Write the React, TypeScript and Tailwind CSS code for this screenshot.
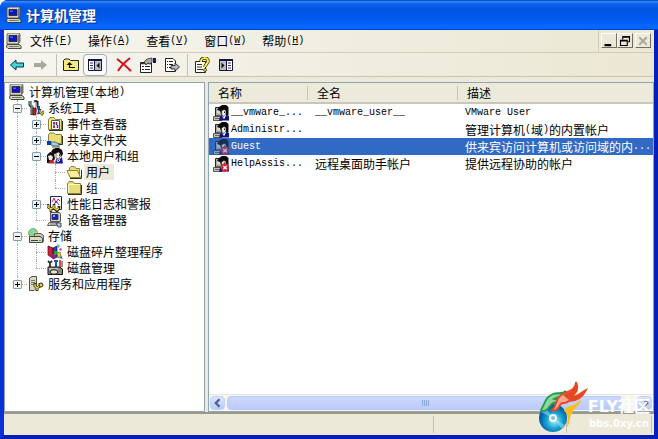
import { ReactNode, useState } from "react";
import clsx from "clsx";

interface IIcon {
    children: ReactNode;
    className?: string;
}

const Icon = ({ children, className }: IIcon) => {
    return (
        <svg viewBox="0 0 16 16" aria-hidden="true" className={clsx("shrink-0", className ?? "size-4")}>
            {children}
        </svg>
    );
};

const ComputerIcon = () => (
    <Icon>
        <path d="M1 1L3 0H13L14 1V9L12 11H1Z" fill="#d8d4c0" stroke="#55534a" strokeWidth=".8" />
        <path d="M12 2L14 1V9L12 11Z" fill="#77746a" />
        <path d="M3 2.500H11V8.500H3Z" fill="#0a14c8" stroke="#222" strokeWidth=".8" />
        <path d="M4 3.500H7V5H4Z" fill="#4468ff" />
        <path d="M1 11.500H13L15 13V15.500H2L0.500 14Z" fill="#d8d4c0" stroke="#333" strokeWidth=".9" />
        <path d="M3 13.500H12" stroke="#77746a" />
        <path d="M11 13H13V14H11Z" fill="#2c2" />
    </Icon>
);

const ToolsIcon = () => (
    <Icon>
        <path d="M2 1V5L4 7V15" stroke="#333" strokeWidth="3" fill="none" />
        <path d="M2 1V4L4 6V14" stroke="#6ca6a0" strokeWidth="1.400" fill="none" />
        <path d="M6 1L9 2V7L11 14" stroke="#222" strokeWidth="3" fill="none" />
        <path d="M6 2L8 3V6L10 13" stroke="#d8d8d8" strokeWidth="1.300" fill="none" />
        <path d="M5 8H8V15H5Z" fill="#c22018" stroke="#400" strokeWidth=".6" />
        <path d="M10 6H12V14H10Z" fill="#2848b0" />
        <path d="M12 9V12L14 14L16 11" stroke="#333" strokeWidth="2.400" fill="none" />
        <path d="M12 10V12L14 14L15.500 11.500" stroke="#e8c830" strokeWidth="1.300" fill="none" />
    </Icon>
);

const FolderShape = () => (
    <>
        <path d="M1.500 3.500L3 1.500H7L8.500 3.500H14.500V13.500H1.500Z" fill="#e9dd7a" stroke="#8d8238" />
        <path d="M2.500 5V12.500M2.500 4.500H13.500" stroke="#fffbc8" />
        <path d="M2 14.500H15.500V5" stroke="#333018" fill="none" />
    </>
);

const FolderIcon = () => (
    <Icon>
        <FolderShape />
    </Icon>
);

const OpenFolderIcon = () => (
    <Icon>
        <path d="M3.500 12V4L5 2.500H8.500L10 4.500H13.500V12" fill="#e9dd7a" stroke="#8d8238" />
        <path d="M1 6.500H11.500L14.500 13.500H4Z" fill="#f6ee98" stroke="#8d8238" />
        <path d="M4 14.500H15.500V6" stroke="#333018" fill="none" />
    </Icon>
);

const EventIcon = () => (
    <Icon>
        <FolderShape />
        <path d="M4.500 4.500H12.500V13.500H4.500Z" fill="#fff" stroke="#555" />
        <path d="M6 7H8M6 11H8" stroke="#d02020" strokeWidth="2" />
        <path d="M9.500 6V9M10.500 9V12" stroke="#2030c0" strokeWidth="1.500" />
        <path d="M6 9H8" stroke="#222" />
    </Icon>
);

const SharedIcon = () => (
    <Icon>
        <path d="M1.500 2.500L3 1H7L8.500 2.500H14.500V11.500H1.500Z" fill="#e9dd7a" stroke="#8d8238" />
        <path d="M4 12.500H15.500V4" stroke="#333018" fill="none" />
        <path d="M0 9H4V13H0Z" fill="#0838c0" />
        <path d="M4 10H8L12 12V14H7L4 13Z" fill="#a9d4d8" stroke="#35585c" strokeWidth=".8" />
        <path d="M5 15H13" stroke="#555" />
    </Icon>
);

const UserIcon = ({ disabled }: { disabled?: boolean }) => (
    <Icon>
        <path d="M2.500 2.500H9V11H2.500Z" fill="#a9a99c" stroke="#222" />
        <path d="M4 4.500H8V8.500H4Z" fill="#dcdccf" />
        <path d="M0.500 11.500H9V15.500H0.500Z" fill="#c4c2b2" stroke="#333" strokeWidth=".8" />
        <path d="M2 13.500H7" stroke="#666" />
        <path d="M4 5L6 2L9 0H13L15.500 2V10L13 10L12 5L9 6L8 9L7 6Z" fill="#080808" />
        <path d="M8.500 6L11 4.500L13 5.500V9L11 11.500L9 10.500Z" fill="#f5f0e8" stroke="#111" strokeWidth=".6" />
        <path d="M11 6.500H12V8H11Z" fill="#111" />
        <path d="M6 15.500L7 12L9.500 10.500L11 13L13.500 9.500L16 11V15.500Z" fill="#10107c" />
        <path d="M9.500 11.500L11 13.500L12.500 10.500" fill="none" stroke="#fff" />
        {disabled && (
            <>
                <circle cx="12" cy="11.500" r="4.200" fill="#d82434" />
                <path d="M10.300 10L13.700 13.200M13.700 10L10.300 13.200" stroke="#fff" strokeWidth="1.200" />
            </>
        )}
    </Icon>
);

const GroupIcon = () => (
    <Icon>
        <path d="M0 7L3 4L7 5L8 11L4 15H0Z" fill="#111" />
        <path d="M1 8L4 7L6 9L5 12L2 12Z" fill="#f4e4dc" />
        <path d="M4 4L6 1L9 0H12L15 2L16 6L14 9L11 5L7 6Z" fill="#100808" />
        <path d="M9 5L12 4L14 7L12 11L9 10Z" fill="#f8ece0" stroke="#222" strokeWidth=".6" />
        <path d="M12 6H13V8H12Z" fill="#922" />
        <path d="M8 15.500L9 11L12 12L15 9L16 15.500Z" fill="#10189c" />
        <path d="M1 15.500L3 12L6 12L8 15.500Z" fill="#b82828" />
        <path d="M10 12L11 14L13 12" fill="none" stroke="#fff" />
    </Icon>
);

const PerfIcon = () => (
    <Icon>
        <path d="M3.500 .5H14.500V13.500H3.500Z" fill="#fff" stroke="#1c2464" />
        <path d="M5 6L7 2L9 7L11 3L13 5" fill="none" stroke="#d02060" />
        <path d="M7 9L9 5L12 9" fill="none" stroke="#3038c0" />
        <path d="M1 8V11L4 13L7 11V8M4 13V16M7 12L10 15L12 12V10" fill="none" stroke="#302c10" strokeWidth="2.600" />
        <path d="M1 9V11L4 13L7 11V9M4 13V15M7 12L10 14L12 12" fill="none" stroke="#eed848" strokeWidth="1.300" />
    </Icon>
);

const DeviceIcon = () => (
    <Icon>
        <path d="M3.500 .5H12.500L13.500 2V9.500H3.500Z" fill="#d8d4c0" stroke="#555" />
        <path d="M5 2.500H11V7.500H5Z" fill="#1020d0" stroke="#223" strokeWidth=".7" />
        <path d="M6 3H8V5H6Z" fill="#80a8ff" />
        <path d="M2 10.500H12L14 13.500H0.500Z" fill="#dedac8" stroke="#444" strokeWidth=".8" />
        <path d="M3 12H11" stroke="#777" />
        <path d="M9 11H14V15H11Z" fill="#aec8d4" stroke="#335" strokeWidth=".8" />
    </Icon>
);

const StorageIcon = () => (
    <Icon>
        <circle cx="5" cy="5" r="4.500" fill="#8ed47c" stroke="#4b9a50" strokeWidth=".7" />
        <path d="M5 5L2 1L6 .5Z" fill="#70d4e4" />
        <path d="M5 5L9 4L9 7Z" fill="#f4e860" />
        <path d="M6.500 5.500H13L15.500 7.500V13.500H6.500Z" fill="#c4c1b2" stroke="#444" strokeWidth=".8" />
        <path d="M1.500 8.500H12L14.500 10.500V14.500H1.500Z" fill="#dcd9ca" stroke="#333" strokeWidth=".9" />
        <path d="M3 12.500H10" stroke="#444" />
        <path d="M11 12H13V13H11Z" fill="#2b2" />
    </Icon>
);

const DefragIcon = () => (
    <Icon>
        <path d="M1 2L6 4V14L1 11Z" fill="#d42034" stroke="#500" strokeWidth=".7" />
        <path d="M6 4L10 2V13L6 15Z" fill="#2440b8" stroke="#114" strokeWidth=".7" />
        <path d="M2 12L6 15L9 14V11L5 10Z" fill="#a01888" />
        <path d="M7 7H10V11H7Z" fill="#28a048" />
        <path d="M10 9L13 8L14 12L11 14Z" fill="#f0d030" stroke="#540" strokeWidth=".6" />
        <path d="M10 0L13 2L11 4Z" fill="#38b848" />
        <path d="M13 4L15 5L14 7L12 6Z" fill="#d838c0" />
        <path d="M12 14L15 12L15.500 15Z" fill="#2868d8" />
    </Icon>
);

const DiskIcon = () => (
    <Icon>
        <path d="M1 1L3 3L5 1M3 3V8" fill="none" stroke="#333" strokeWidth="1.800" />
        <path d="M7 1H11M9 1V8" stroke="#1c58b8" strokeWidth="2" />
        <path d="M13 0V8" stroke="#c82820" strokeWidth="1.600" />
        <path d="M15 1V7" stroke="#222" />
        <path d="M1 7H12L15.500 9V14.500H1Z" fill="#8f8e86" stroke="#111" />
        <path d="M2 9H11" stroke="#eee" />
        <ellipse cx="7" cy="12" rx="4" ry="2.300" fill="#e4e1d0" stroke="#111" />
        <path d="M12 11H14V12H12Z" fill="#2b2" />
    </Icon>
);

const ServicesIcon = () => (
    <Icon>
        <path d="M1.500 2L4 .5H8.500V12L6 14.500H1.500Z" fill="#dad7c8" stroke="#55534c" />
        <path d="M3 4.500H7M3 6.500H7M3 8.500H7" stroke="#77746a" />
        <path d="M7 7V10L9 12L12 10V7M9 12V15" fill="none" stroke="#333010" strokeWidth="2.800" />
        <path d="M7 8V10L9 12L11.500 10V8M9 12V14" fill="none" stroke="#eee058" strokeWidth="1.300" />
        <circle cx="13" cy="9" r="2" fill="#eed848" stroke="#333010" />
    </Icon>
);

interface IToolButton {
    label: string;
    active?: boolean;
    disabled?: boolean;
    children: ReactNode;
}

const ToolButton = ({ label, active, disabled, children }: IToolButton) => {
    return (
        <button
            aria-label={label}
            disabled={disabled}
            className={clsx(
                "flex h-[22px] w-6 items-center justify-center rounded-sm border",
                active ? "border-[#98aecb] bg-[#fbfaf6]" : "border-transparent"
            )}
        >
            <Icon>{children}</Icon>
        </button>
    );
};

const ToolSeparator = () => (
    <div className="flex w-[6px] justify-center">
        <div className="h-[22px] w-px bg-[#c5c2b0]" />
    </div>
);

const Toolbar = () => {
    return (
        <div className="flex h-6 shrink-0 items-center border-b border-[#c9c6b5] pl-px">
            <ToolButton label="后退">
                <path d="M7 3L1.500 8L7 13V10H14.500V6H7Z" fill="#3ed6dc" stroke="#08304c" strokeLinejoin="round" />
            </ToolButton>
            <ToolButton label="前进" disabled>
                <path d="M8 3L14 8L8 13V10H1V6H8Z" fill="#aaa899" />
            </ToolButton>
            <ToolSeparator />
            <ToolButton label="向上">
                <path d="M.5 13.500V3.500L2 2H6L7.500 3.500H15.500V13.500Z" fill="#f3ed80" stroke="#222" />
                <path d="M3.500 8L6.500 5L9.500 8Z" fill="#111" />
                <path d="M6.500 7V10.500H12" fill="none" stroke="#111" strokeWidth="1.200" />
            </ToolButton>
            <ToolButton label="显示/隐藏控制台树" active>
                <path d="M1.500 2.500H14.500V13.500H1.500Z" fill="#fff" stroke="#14144c" />
                <path d="M1 3H15" stroke="#14144c" strokeWidth="2" />
                <path d="M8 4H14V13H8Z" fill="#bebdc4" />
                <path d="M7.500 4V13" stroke="#14144c" />
                <path d="M3 6H6M3 8.500H6M3 11H6" stroke="#333" />
                <path d="M12.500 5.500V11.500L9.500 8.500Z" fill="#111" />
            </ToolButton>
            <div className="w-[5px]" />
            <ToolButton label="删除">
                <path d="M1 2C5 5 10 9 15 14M14 1C9 5 5 9 2 14" fill="none" stroke="#d8101c" strokeWidth="2" />
            </ToolButton>
            <ToolButton label="属性">
                <path d="M.5 5.500H11.500V15.500H.5Z" fill="#fff" stroke="#222" />
                <path d="M1 6.500H11" stroke="#333" strokeWidth="1.500" />
                <path d="M2 9.500H4M5 9.500H10M2 12.500H4M5 12.500H10" stroke="#222" />
                <path d="M4 5L7 2L12 1V5L10 7L8 6L6 8L5 6Z" fill="#a9a9a6" stroke="#333" strokeWidth=".8" />
                <path d="M13 1H16V6H13Z" fill="#18186c" />
            </ToolButton>
            <ToolButton label="导出列表">
                <path d="M1.500 1.500H9L11.500 4V14.500H1.500Z" fill="#fff" stroke="#222" />
                <path d="M3 4.500H4M5 4.500H9M3 7.500H4M5 7.500H9M3 10.500H4M5 10.500H7" stroke="#222" />
                <path d="M7 8.500H11V6L15.500 10L11 14V12H7Z" fill="#b9b9bd" stroke="#222" strokeWidth=".9" />
            </ToolButton>
            <ToolSeparator />
            <ToolButton label="帮助">
                <path d="M1.500 4.500H11.500V15.500H1.500Z" fill="#fff" stroke="#222" />
                <path d="M3 7.500H8M3 10H8M3 12.500H9" stroke="#333" />
                <path d="M7 5C7 0 14 0 14 4C14 7 11 7 11 10" fill="none" stroke="#333010" strokeWidth="3.400" />
                <path d="M7 5C7 0 14 0 14 4C14 7 11 7 11 10" fill="none" stroke="#f8ec38" strokeWidth="2" />
                <circle cx="11" cy="13" r="1.500" fill="#f8ec38" stroke="#333010" strokeWidth=".8" />
            </ToolButton>
            <ToolButton label="显示操作窗格">
                <path d="M1.500 2.500H14.500V13.500H1.500Z" fill="#fff" stroke="#14144c" />
                <path d="M1 3H15" stroke="#14144c" strokeWidth="2" />
                <path d="M2 4H8V13H2Z" fill="#bebdc4" />
                <path d="M8.500 4V13" stroke="#14144c" />
                <path d="M10 6H13M10 8.500H13M10 11H13" stroke="#333" />
                <path d="M3.500 5.500V11.500L6.500 8.500Z" fill="#111" />
            </ToolButton>
        </div>
    );
};

const menus = [
    { name: "文件", accel: "F" },
    { name: "操作", accel: "A" },
    { name: "查看", accel: "V" },
    { name: "窗口", accel: "W" },
    { name: "帮助", accel: "H" },
];

const childButton =
    "flex h-[15px] w-4 items-center justify-center border border-t-white border-l-white border-r-[#716f64] border-b-[#716f64] bg-[#ece9d8]";

const MenuBar = () => {
    return (
        <div className="flex h-[23px] shrink-0 border-b border-[#cfccba] pl-[2px]">
            <div className="pt-[3px]">
                <ComputerIcon />
            </div>
            <nav className="flex flex-1 items-center">
                {menus.map((menu) => (
                    <button key={menu.accel} className="flex items-center px-2 leading-5">
                        {menu.name}
                        <Latin>
                            (<u>{menu.accel}</u>)
                        </Latin>
                    </button>
                ))}
            </nav>
            <div className="flex items-start border-l border-[#d2cfbe] pt-[3px] pr-[3px] pl-[2px]">
                <button aria-label="最小化" className={childButton}>
                    <Icon className="size-3">
                        <path d="M2 12H11V15H2Z" fill="#000" />
                    </Icon>
                </button>
                <button aria-label="还原" className={childButton}>
                    <Icon className="size-3">
                        <path d="M5 6V2H14V9H12M5 3H14" fill="none" stroke="#000" strokeWidth="1.500" />
                        <path d="M2 7H11V14H2ZM2 8H11" fill="none" stroke="#000" strokeWidth="1.500" />
                    </Icon>
                </button>
                <button aria-label="关闭" disabled className={clsx(childButton, "ml-[2px]")}>
                    <Icon className="size-3">
                        <path d="M3 3L13 13M13 3L3 13" stroke="#aca899" strokeWidth="2.600" />
                    </Icon>
                </button>
            </div>
        </div>
    );
};

const Latin = ({ children }: { children: ReactNode }) => (
    <span className="font-['Liberation_Mono',monospace] text-[10px]">{children}</span>
);

type Guide = "line" | "tee" | "end";

interface INode {
    label: string;
    suffix?: string;
    icon: ReactNode;
    guides: Guide[];
    toggle?: "+" | "-";
}

const nodes: INode[] = [
    { label: "计算机管理", suffix: "本地", icon: <ComputerIcon />, guides: [] },
    { label: "系统工具", icon: <ToolsIcon />, guides: ["tee"], toggle: "-" },
    { label: "事件查看器", icon: <EventIcon />, guides: ["line", "tee"], toggle: "+" },
    { label: "共享文件夹", icon: <SharedIcon />, guides: ["line", "tee"], toggle: "+" },
    { label: "本地用户和组", icon: <GroupIcon />, guides: ["line", "tee"], toggle: "-" },
    { label: "用户", icon: <OpenFolderIcon />, guides: ["line", "line", "tee"] },
    { label: "组", icon: <FolderIcon />, guides: ["line", "line", "end"] },
    { label: "性能日志和警报", icon: <PerfIcon />, guides: ["line", "tee"], toggle: "+" },
    { label: "设备管理器", icon: <DeviceIcon />, guides: ["line", "end"] },
    { label: "存储", icon: <StorageIcon />, guides: ["tee"], toggle: "-" },
    { label: "磁盘碎片整理程序", icon: <DefragIcon />, guides: ["line", "tee"] },
    { label: "磁盘管理", icon: <DiskIcon />, guides: ["line", "end"] },
    { label: "服务和应用程序", icon: <ServicesIcon />, guides: ["end"], toggle: "+" },
];

const GuideCell = ({ guide, toggle }: { guide: Guide; toggle?: "+" | "-" }) => (
    <div className="relative h-4 w-[19px] shrink-0">
        <div
            className={clsx(
                "absolute top-0 left-[9px] border-l border-dotted border-[#b3b1a6]",
                guide === "end" ? "h-2" : "h-4"
            )}
        />
        {guide !== "line" && (
            <div className="absolute top-2 right-0 left-[9px] border-t border-dotted border-[#b3b1a6]" />
        )}
        {toggle && (
            <button
                aria-label={toggle === "+" ? "展开" : "折叠"}
                className="absolute top-1 left-[5px] size-[9px] rounded-[1px] border border-[#7f9db9] bg-[#f1f0ea]"
            >
                <svg viewBox="0 0 7 7" className="size-[7px]">
                    <path d={toggle === "+" ? "M1 3.500H6M3.500 1V6" : "M1 3.500H6"} stroke="#000" />
                </svg>
            </button>
        )}
    </div>
);

const Tree = () => {
    return (
        <div className="w-[201px] shrink-0 overflow-hidden border border-[#8fa5b5] bg-white pt-px pl-[3px]">
            <ul>
                {nodes.map((node) => (
                    <li key={node.label} className="flex h-4 items-center">
                        {node.guides.map((guide, i) => (
                            <GuideCell
                                key={i}
                                guide={guide}
                                toggle={i === node.guides.length - 1 ? node.toggle : undefined}
                            />
                        ))}
                        <div className="flex w-[19px] shrink-0 pl-px">{node.icon}</div>
                        <span
                            className={clsx(
                                "flex h-4 items-center pr-1 pl-[2px] whitespace-nowrap",
                                node.label === "用户" && "bg-[#ece9d8]"
                            )}
                        >
                            {node.label}
                            {node.suffix && (
                                <>
                                    <Latin>(</Latin>
                                    {node.suffix}
                                    <Latin>)</Latin>
                                </>
                            )}
                        </span>
                    </li>
                ))}
            </ul>
        </div>
    );
};

const users = [
    { name: "__vmware_...", full: <Latin>__vmware_user__</Latin>, desc: <Latin>VMware User</Latin> },
    {
        name: "Administr...",
        full: "",
        desc: (
            <>
                管理计算机<Latin>(</Latin>域<Latin>)</Latin>的内置帐户
            </>
        ),
    },
    {
        name: "Guest",
        full: "",
        desc: (
            <>
                供来宾访问计算机或访问域的内<Latin>...</Latin>
            </>
        ),
        disabled: true,
    },
    { name: "HelpAssis...", full: "远程桌面助手帐户", desc: "提供远程协助的帐户", disabled: true },
];

const scrollButton =
    "flex w-[15px] items-center justify-center rounded-sm border border-[#c3d2f4] bg-gradient-to-b from-[#dbe5ff] to-[#b9cbf8]";

const ScrollBar = () => {
    return (
        <div className="flex h-[17px] gap-[2px] border-t border-[#e8e8e0] bg-[#f6f6f2] p-px">
            <button aria-label="向左滚动" className={scrollButton}>
                <Icon className="size-3">
                    <path d="M10 3L5 8L10 13" fill="none" stroke="#4d6185" strokeWidth="3" />
                </Icon>
            </button>
            <div className="flex flex-1 pr-3">
                <div className="flex flex-1 items-center justify-center gap-px rounded-sm border border-[#b9c9f0] bg-gradient-to-b from-[#cbd8fd] to-[#bccbf8]">
                    {[0, 1, 2, 3].map((i) => (
                        <div key={i} className="h-[6px] w-px bg-[#8ca6de]" />
                    ))}
                </div>
            </div>
            <button aria-label="向右滚动" className={scrollButton}>
                <Icon className="size-3">
                    <path d="M6 3L11 8L6 13" fill="none" stroke="#4d6185" strokeWidth="3" />
                </Icon>
            </button>
        </div>
    );
};

const UserList = () => {
    const [selected, setSelected] = useState("Guest");

    return (
        <div className="flex min-w-0 flex-1 flex-col border border-[#8fa5b5] bg-white">
            <table className="w-full table-fixed border-collapse">
                <thead>
                    <tr className="h-5 border-b-2 border-[#cbc7b8] bg-[#ebeadb] text-left">
                        <th className="w-[99px] pl-[9px] font-normal">
                            <div className="border-r border-[#c7c5b2] leading-[14px]">名称</div>
                        </th>
                        <th className="w-[150px] pl-[9px] font-normal">
                            <div className="border-r border-[#c7c5b2] leading-[14px]">全名</div>
                        </th>
                        <th className="pl-[9px] leading-[14px] font-normal">描述</th>
                    </tr>
                </thead>
                <tbody>
                    {users.map((user) => (
                        <tr
                            key={user.name}
                            onClick={() => setSelected(user.name)}
                            className={clsx(
                                "h-[17px] whitespace-nowrap",
                                selected === user.name && "bg-[#316ac5] text-white"
                            )}
                        >
                            <td className="p-0 pl-1">
                                <div className="flex h-[17px] items-center gap-[2px]">
                                    <div className={selected === user.name ? "opacity-60" : ""}>
                                        <UserIcon disabled={user.disabled} />
                                    </div>
                                    <Latin>{user.name}</Latin>
                                </div>
                            </td>
                            <td className="p-0 pl-[7px]">
                                <div className="flex h-[17px] items-center">{user.full}</div>
                            </td>
                            <td className="p-0 pl-[7px]">
                                <div className="flex h-[17px] items-center">{user.desc}</div>
                            </td>
                        </tr>
                    ))}
                </tbody>
            </table>
            <div className="flex-1" />
            <ScrollBar />
        </div>
    );
};

const Watermark = () => {
    return (
        <div className="pointer-events-none absolute right-2 bottom-[5px] flex items-end">
            <svg viewBox="0 0 50 54" className="h-[54px] w-[50px]">
                <defs>
                    <radialGradient id="disc" cx="55%" cy="60%">
                        <stop offset="0" stopColor="#b4f0fa" />
                        <stop offset=".55" stopColor="#1ba6d2" />
                        <stop offset="1" stopColor="#0560a8" />
                    </radialGradient>
                </defs>
                <circle cx="15" cy="38" r="14" fill="url(#disc)" />
                <path d="M15 38L3 32L7 27ZM15 38L27 45L24 49Z" fill="#a6e8f5" opacity=".5" />
                <circle cx="15" cy="38" r="4" fill="#f2fcff" />
                <circle cx="15" cy="38" r="2" fill="#8fbdd2" />
                <path d="M26 31C29 24 36 28 43 19C42 26 36 28 34 33C31 37 33 42 29 47C30 38 30 33 26 31Z" fill="#f8bd20" />
                <path
                    d="M3 30C7 24 7 17 15 14C20 12 24 15 28 11C25 17 20 17 16 19C21 21 24 19 27 18C23 23 19 22 15 23C11 26 10 31 5 31Z"
                    fill="#8fd49c"
                    stroke="#1f9a48"
                    strokeWidth="1.800"
                />
                <path
                    d="M14 30C19 27 17 17 25 14C31 11 38 10 38 2C41 9 38 14 32 17C38 18 42 13 48 10C44 18 37 21 31 21C27 25 24 21 22 25C20 29 17 32 14 30Z"
                    fill="#f7a890"
                    stroke="#e64824"
                    strokeWidth="1.800"
                />
                <path d="M25 15C31 12 38 10 38 2C41 9 38 14 32 17C38 18 42 13 48 10C44 18 37 21 31 20Z" fill="#e64824" />
            </svg>
            <div className="pb-1 text-center text-white">
                <div className="font-['DejaVu_Sans','Noto_Sans_CJK_SC',sans-serif] text-[16px] leading-[22px] font-bold">
                    FLY社区
                </div>
                <div className="font-['DejaVu_Sans',sans-serif] text-[10px] leading-[12px] font-bold">
                    bbs.0xy.cn
                </div>
            </div>
        </div>
    );
};

const App = () => {
    return (
        <div className="flex h-screen bg-white font-['Noto_Sans_CJK_SC',sans-serif] text-[12px] leading-4 text-black">
            <div className="relative flex min-w-0 flex-1 flex-col overflow-hidden rounded-tl-lg bg-[#0a3fd8]">
                <header className="flex h-[30px] shrink-0 items-center gap-1 border-t border-b border-t-[#0a50c0] border-b-[#0440c8] bg-[linear-gradient(#3c8cf8,#0a62ee_3px,#0054e3_8px,#0058ea_16px,#0368ff_26px)] pl-[6px]">
                    <ComputerIcon />
                    <h1 className="text-[14px] font-bold text-white [text-shadow:1px_1px_#0a2a80]">计算机管理</h1>
                </header>
                <div className="flex min-h-0 flex-1 flex-col border-x-4 border-b-4 border-[#0831d9] border-r-[#0420b8] border-b-[#0420b8] bg-[#ece9d8]">
                    <div className="shrink-0 bg-gradient-to-r from-[#f6f5f0] to-[#ebe7d3]">
                        <MenuBar />
                        <Toolbar />
                    </div>
                    <main className="flex min-h-0 flex-1 gap-[3px] pt-[5px]">
                        <Tree />
                        <UserList />
                    </main>
                    <footer className="flex h-[23px] shrink-0 border-t-2 border-[#9b988a] py-[2px]">
                        <div className="flex-1 border-r border-[#c5c2b0]" />
                        <div className="w-[133px] border-r border-[#c5c2b0]" />
                        <div className="mr-[2px] w-[85px] border-r border-[#c5c2b0]" />
                    </footer>
                </div>
                <Watermark />
            </div>
        </div>
    );
};

export default App;
